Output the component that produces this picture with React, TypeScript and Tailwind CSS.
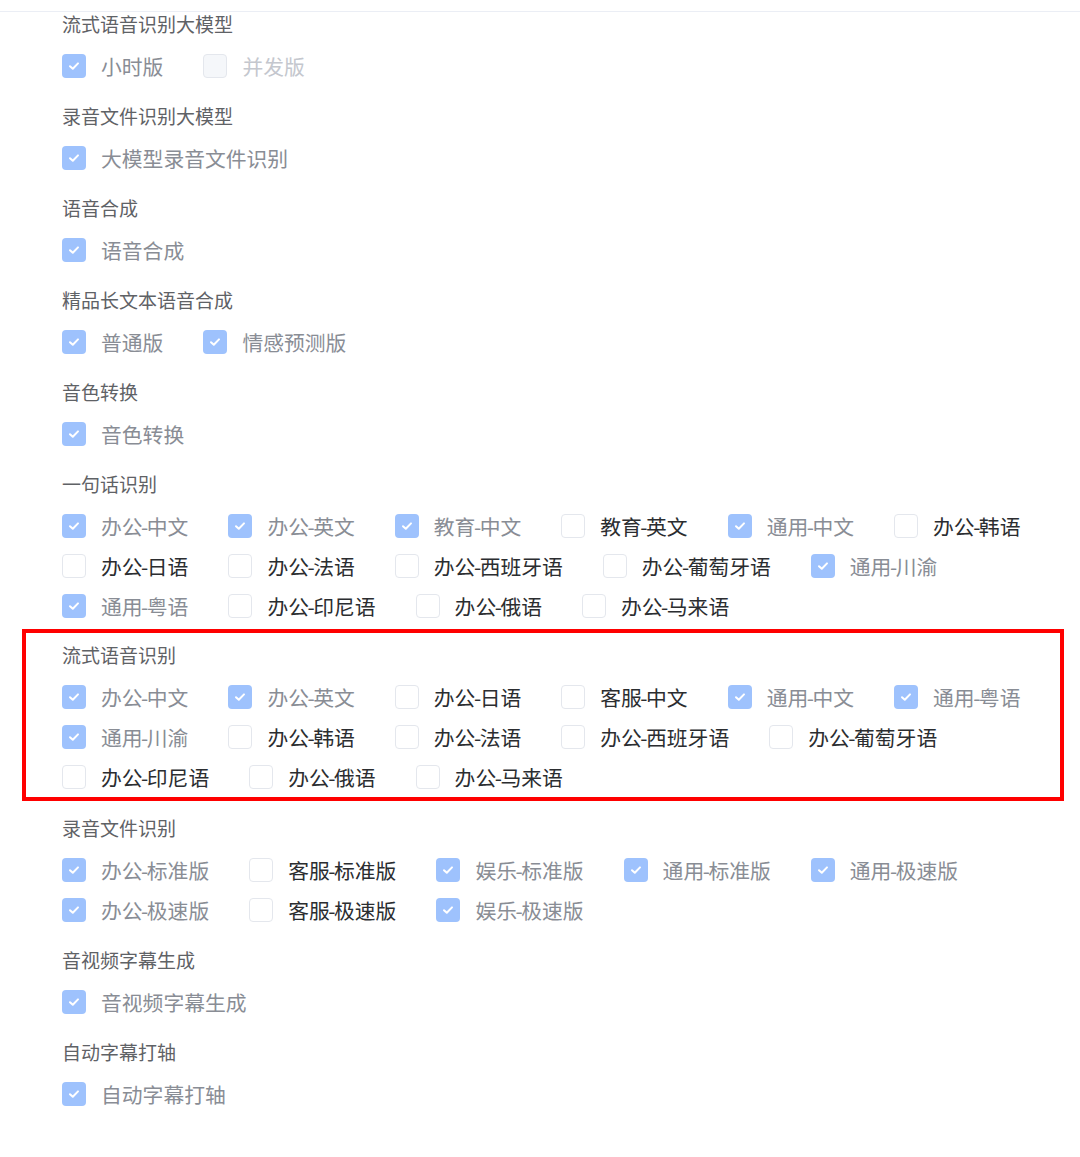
import * as React from "react";

type State = "checked" | "open" | "off";
type Item = { label: string; state: State };
type Section = { title: string; rows: Item[][]; boxed?: boolean };

const c = (label: string): Item => ({ label, state: "checked" });
const o = (label: string): Item => ({ label, state: "open" });
const x = (label: string): Item => ({ label, state: "off" });

const SECTIONS: Section[] = [
  { title: "流式语音识别大模型", rows: [[c("小时版"), x("并发版")]] },
  { title: "录音文件识别大模型", rows: [[c("大模型录音文件识别")]] },
  { title: "语音合成", rows: [[c("语音合成")]] },
  { title: "精品长文本语音合成", rows: [[c("普通版"), c("情感预测版")]] },
  { title: "音色转换", rows: [[c("音色转换")]] },
  {
    title: "一句话识别",
    rows: [
      [c("办公-中文"), c("办公-英文"), c("教育-中文"), o("教育-英文"), c("通用-中文"), o("办公-韩语")],
      [o("办公-日语"), o("办公-法语"), o("办公-西班牙语"), o("办公-葡萄牙语"), c("通用-川渝")],
      [c("通用-粤语"), o("办公-印尼语"), o("办公-俄语"), o("办公-马来语")],
    ],
  },
  {
    title: "流式语音识别",
    boxed: true,
    rows: [
      [c("办公-中文"), c("办公-英文"), o("办公-日语"), o("客服-中文"), c("通用-中文"), c("通用-粤语")],
      [c("通用-川渝"), o("办公-韩语"), o("办公-法语"), o("办公-西班牙语"), o("办公-葡萄牙语")],
      [o("办公-印尼语"), o("办公-俄语"), o("办公-马来语")],
    ],
  },
  {
    title: "录音文件识别",
    rows: [
      [c("办公-标准版"), o("客服-标准版"), c("娱乐-标准版"), c("通用-标准版"), c("通用-极速版")],
      [c("办公-极速版"), o("客服-极速版"), c("娱乐-极速版")],
    ],
  },
  { title: "音视频字幕生成", rows: [[c("音视频字幕生成")]] },
  { title: "自动字幕打轴", rows: [[c("自动字幕打轴")]] },
];

function Box({ state }: { state: State }) {
  if (state === "checked") {
    return (
      <span className="flex h-6 w-6 shrink-0 items-center justify-center rounded-[4px] bg-[#9ec2fd]">
        <svg width="12" height="10" viewBox="0 0 12 10" fill="none">
          <path
            d="M2 5.2 4.8 7.8 10 2.4"
            stroke="#fff"
            strokeWidth="2"
            strokeLinecap="round"
            strokeLinejoin="round"
          />
        </svg>
      </span>
    );
  }
  return (
    <span
      className={
        "h-6 w-6 shrink-0 rounded-[4px] border " +
        (state === "off"
          ? "border-[#e4e7ed] bg-[#f5f7fa]"
          : "border-[#e4e7ed] bg-white")
      }
    />
  );
}

const labelTone = {
  checked: "text-[#898d95]",
  open: "text-[#2b2d30]",
  off: "text-[#c4c7ce]",
} as const;

// the hyphen in the source font is narrower than Noto's, pull it in a little
function Label({ text }: { text: string }) {
  const [head, tail] = text.split("-");
  if (tail === undefined) return <>{text}</>;
  return (
    <>
      {head}
      <span className="-mx-[1.5px]">-</span>
      {tail}
    </>
  );
}

function Check({ item }: { item: Item }) {
  return (
    <label className="mr-[40px] flex h-10 items-center gap-[15px]">
      <Box state={item.state} />
      <span className={"whitespace-nowrap text-[20.8px] leading-none " + labelTone[item.state]}>
        <Label text={item.label} />
      </span>
    </label>
  );
}

function Group({ section }: { section: Section }) {
  return (
    <div>
      <p className="flex h-[26px] items-center pb-[4px] text-[19px] leading-none text-[#5f6266]">
        {section.title}
      </p>
      <div className="mt-[8px]">
        {section.rows.map((row, i) => (
          <div key={i} className="flex">
            {row.map((item) => (
              <Check key={item.label} item={item} />
            ))}
          </div>
        ))}
      </div>
    </div>
  );
}

export default function App() {
  return (
    <div
      className="min-h-[1157px] bg-white"
      style={{ fontFamily: '"Noto Sans CJK SC", "Noto Sans", sans-serif' }}
    >
      <div className="h-[12px] border-b border-[#ebeef5]" />
      <div className="flex flex-col px-[62px]">
        {SECTIONS.map((s, i) =>
          s.boxed ? (
            <div
              key={s.title}
              className="mt-[3px] mb-[-3px] ml-[-40px] mr-[-46px] border-4 border-[#ff0000] pt-[10px] pl-[36px] pr-[42px]"
            >
              <Group section={s} />
            </div>
          ) : (
            <div key={s.title} className={i === 0 ? "" : "mt-[18px]"}>
              <Group section={s} />
            </div>
          )
        )}
      </div>
    </div>
  );
}
